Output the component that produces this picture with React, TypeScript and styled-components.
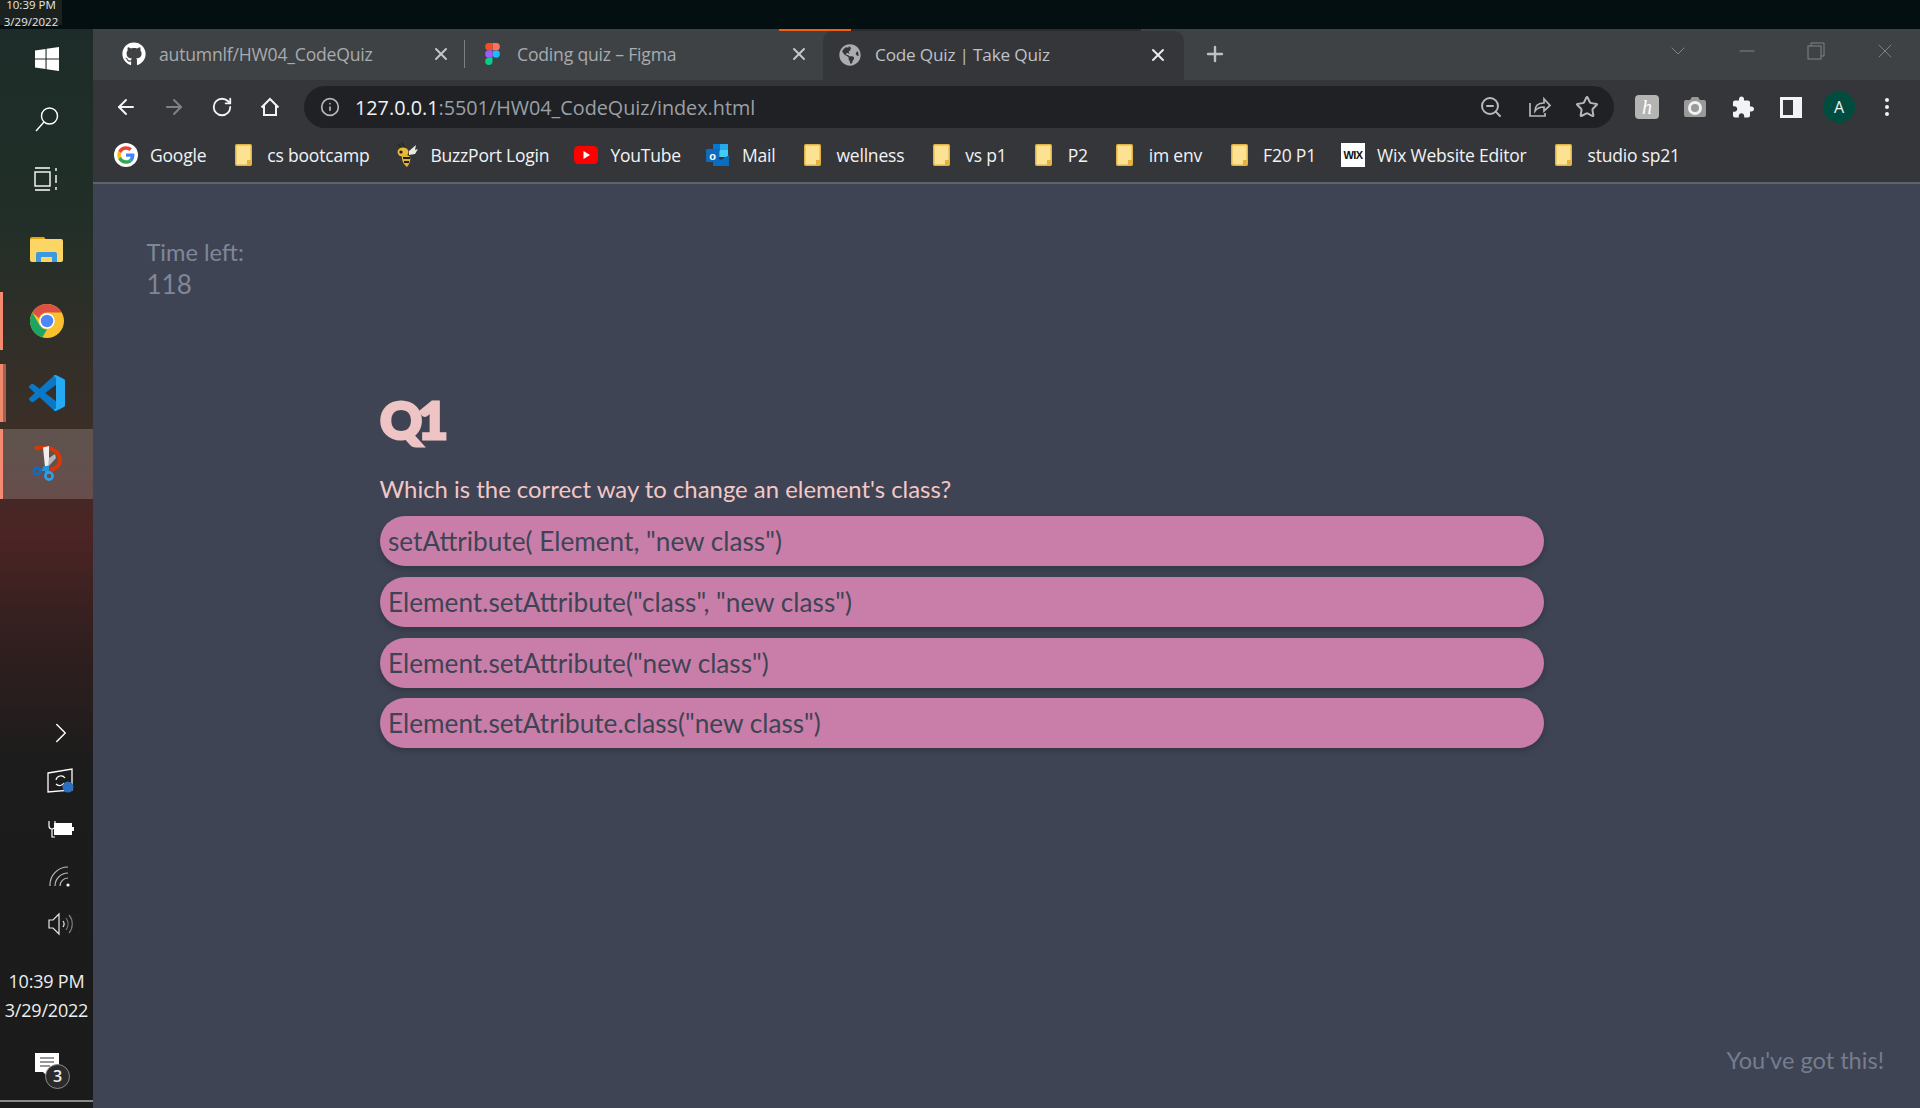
import React from 'react';
import styled, { createGlobalStyle } from 'styled-components';
import { ArrowLeft, ArrowRight, RotateCw, Info, ZoomOut, Star, X, Plus, Minus, ChevronDown, ChevronRight, MoreVertical } from 'lucide-react';
import { FaGithub, FaGlobeAmericas } from 'react-icons/fa';

const GlobalStyle = createGlobalStyle`
	html, body { margin: 0; padding: 0; height: 100%; background: #3e4453; overflow: hidden; }
	#root { height: 100%; }
`;

const Screen = styled.div`
	width: 1920px;
	height: 1108px;
	display: flex;
	flex-direction: column;
	font-family: 'Open Sans', 'Liberation Sans', sans-serif;
`;

const TopBar = styled.div`
	height: 29px;
	flex: none;
	background: #030f10;
	overflow: hidden;
`;

const TopClock = styled.div`
	width: 62px;
	height: 29px;
	background: #1b211f;
	color: #e8e8e8;
	font-size: 11.5px;
	line-height: 17px;
	text-align: center;
	& > div:first-child { margin-top: -4px; }
`;

const Desktop = styled.div`
	flex: 1;
	display: flex;
	min-height: 0;
`;

const Taskbar = styled.div`
	width: 93px;
	flex: none;
	display: flex;
	flex-direction: column;
	color: #fff;
	background: linear-gradient(180deg, #1d2c28 0%, #222f28 18%, #3a2f28 36%, #4b2424 47%, #331f1f 56%, #1c1c1c 68%, #1b1b1b 100%);
`;

const TaskSlot = styled.div<{ $h: number; $bar?: number; $active?: boolean; $mt?: number }>`
	height: ${(p) => p.$h}px;
	margin-top: ${(p) => p.$mt || 0}px;
	flex: none;
	display: flex;
	align-items: center;
	justify-content: center;
	position: relative;
	background: ${(p) => (p.$active ? 'rgba(255,255,255,0.18)' : 'transparent')};
	&::before {
		content: '';
		display: ${(p) => (p.$bar ? 'block' : 'none')};
		position: absolute;
		left: 0;
		top: ${(p) => (p.$active ? 0 : 7)}px;
		bottom: ${(p) => (p.$active ? 0 : 7)}px;
		width: ${(p) => p.$bar}px;
		background: ${(p) => (p.$bar === 6 ? 'linear-gradient(90deg,#f08a6e 50%,#a5604d 50%)' : '#f58a70')};
	}
`;

const TraySlot = styled.div<{ $h: number }>`
	height: ${(p) => p.$h}px;
	flex: none;
	display: flex;
	align-items: center;
	justify-content: center;
	padding-left: 28px;
`;

const TaskSpacer = styled.div`
	flex: 1;
`;

const TrayClock = styled.div`
	text-align: center;
	font-size: 18px;
	line-height: 29px;
	color: #eee;
	margin: 20px 0 28px;
	letter-spacing: -0.2px;
`;

const Notify = styled.div`
	height: 42px;
	margin-bottom: 5px;
	display: flex;
	align-items: flex-start;
	justify-content: center;
	position: relative;
`;

const NotifyBadge = styled.div`
	position: absolute;
	left: 45px;
	top: 11px;
	width: 25px;
	height: 25px;
	box-sizing: border-box;
	border-radius: 50%;
	background: #2b2b2b;
	border: 1px solid #8a8a8a;
	color: #eee;
	font-size: 16px;
	font-weight: 600;
	line-height: 23px;
	text-align: center;
`;

const TaskLine = styled.div`
	height: 2px;
	background: #8a8a8a;
	margin-bottom: 6px;
`;

const Browser = styled.div`
	flex: 1;
	min-width: 0;
	display: flex;
	flex-direction: column;
`;

const TabStrip = styled.div`
	height: 51px;
	flex: none;
	display: flex;
	align-items: flex-end;
	padding-left: 14px;
	background: #3e4245;
	position: relative;
`;

const Progress = styled.div`
	position: absolute;
	left: 686px;
	top: 0;
	width: 362px;
	height: 2px;
	background: linear-gradient(90deg, #f25f0c 20%, #2b2b2b 20%);
	z-index: 1;
`;

const Tab = styled.div<{ $active?: boolean; $sep?: boolean }>`
	width: ${(p) => (p.$active ? 361 : 358)}px;
	height: ${(p) => (p.$active ? 49 : 51)}px;
	flex: none;
	box-sizing: border-box;
	display: flex;
	align-items: center;
	gap: 16px;
	padding: 0 ${(p) => (p.$active ? 16 : 14)}px 2px 18px;
	position: relative;
	border-radius: 10px 10px 0 0;
	background: ${(p) => (p.$active ? '#35363a' : 'transparent')};
	color: ${(p) => (p.$active ? '#bfc2c6' : '#a8abaf')};
	font-size: ${(p) => (p.$active ? 17.2 : 17.6)}px;
	svg { flex: none; }
	&::after {
		content: '';
		display: ${(p) => (p.$sep ? 'block' : 'none')};
		position: absolute;
		right: 0;
		top: 11px;
		height: 28px;
		width: 1px;
		background: #7c8084;
	}
`;

const TabIcon = styled.div`
	width: 18px;
	height: 22px;
	flex: none;
	display: flex;
	align-items: center;
	justify-content: center;
`;

const TabTitle = styled.div`
	flex: 1;
	white-space: nowrap;
	letter-spacing: -0.2px;
`;

const NewTab = styled.div`
	width: 24px;
	height: 51px;
	margin-left: 19px;
	padding-bottom: 1px;
	box-sizing: border-box;
	display: flex;
	align-items: center;
	justify-content: center;
	color: #bdc1c6;
`;

const WinControls = styled.div`
	margin-left: auto;
	align-self: stretch;
	display: flex;
	align-items: center;
	padding: 0 23px 8px 0;
	gap: 45px;
	color: #7f8387;
`;

const Toolbar = styled.div`
	height: 54px;
	flex: none;
	box-sizing: border-box;
	display: flex;
	align-items: center;
	padding: 0 21px;
	background: #35363a;
`;

const NavRow = styled.div`
	display: flex;
	align-items: center;
	gap: 24px;
	color: #f1f3f4;
`;

const NavButton = styled.div<{ $dim?: boolean }>`
	width: 24px;
	height: 24px;
	display: flex;
	align-items: center;
	justify-content: center;
	color: ${(p) => (p.$dim ? '#7f8285' : '#f1f3f4')};
`;

const Omnibox = styled.div`
	width: 1310px;
	height: 42px;
	margin-left: 22px;
	box-sizing: border-box;
	display: flex;
	align-items: center;
	padding: 0 15px 0 16px;
	border-radius: 21px;
	background: #202124;
`;

const Url = styled.div`
	flex: 1;
	margin-left: 15px;
	font-size: 19.8px;
	color: #9aa0a6;
	white-space: nowrap;
	b { font-weight: 400; color: #f1f3f4; }
`;

const OmniIcons = styled.div`
	display: flex;
	align-items: center;
	gap: 24px;
	color: #b4b7bb;
`;

const ExtRow = styled.div`
	display: flex;
	align-items: center;
	gap: 24px;
	margin-left: 21px;
`;

const ExtButton = styled.div`
	width: 24px;
	height: 24px;
	display: flex;
	align-items: center;
	justify-content: center;
	color: #f1f3f4;
`;

const KeepBadge = styled.div`
	width: 24px;
	height: 24px;
	border-radius: 4px;
	background: #b4b4b4;
	color: #fff;
	font: italic 20px/24px 'Liberation Serif', serif;
	text-align: center;
`;

const Avatar = styled.div`
	width: 32px;
	height: 32px;
	flex: none;
	margin: 0 -4px;
	border-radius: 50%;
	background: #004d40;
	color: #f1f3f4;
	font-size: 16px;
	line-height: 32px;
	text-align: center;
`;

const Bookmarks = styled.div`
	height: 50px;
	flex: none;
	box-sizing: border-box;
	display: flex;
	align-items: center;
	gap: 25px;
	padding: 0 0 7px 21px;
	background: #35363a;
	border-bottom: 2px solid #5f6368;
`;

const Bookmark = styled.div`
	display: flex;
	align-items: center;
	gap: 12px;
	color: #f1f3f4;
	font-size: 17.5px;
	letter-spacing: -0.2px;
	white-space: nowrap;
`;

const BookmarkIcon = styled.div`
	width: 24px;
	height: 24px;
	flex: none;
	display: flex;
	align-items: center;
	justify-content: center;
`;

const WixBox = styled.div`
	width: 24px;
	height: 24px;
	background: #fff;
	color: #111;
	font: 700 11px/24px 'Liberation Sans', sans-serif;
	letter-spacing: -0.6px;
	text-align: center;
`;

const Page = styled.main`
	flex: 1;
	min-height: 0;
	box-sizing: border-box;
	display: flex;
	flex-direction: column;
	padding: 52px 36px 34px 54px;
	background: #3e4453;
	font-family: 'Lato', 'Open Sans', sans-serif;
`;

const Timer = styled.div`
	color: #7f8798;
	font-size: 23.6px;
	line-height: 32px;
	margin-left: -0.5px;
`;

const TimerValue = styled.div`
	font-size: 26px;
`;

const Quiz = styled.section`
	width: 1164px;
	margin: 86px 0 0 233px;
	display: flex;
	flex-direction: column;
`;

const QuizTitle = styled.h1`
	margin: 0;
	color: #eec4c4;
	font-size: 52px;
	line-height: 66px;
	font-weight: 900;
	-webkit-text-stroke: 3px #eec4c4;
	letter-spacing: -4.5px;
`;

const Question = styled.p`
	margin: 20px 0 0 -0.5px;
	height: 34px;
	color: #f3c7c7;
	font-size: 23.9px;
	line-height: 33px;
	white-space: nowrap;
`;

const Answers = styled.div`
	margin-top: 10px;
	display: flex;
	flex-direction: column;
	gap: 10.8px;
`;

const Answer = styled.button`
	height: 50px;
	padding: 0 0 0 8px;
	border: 0;
	border-radius: 25px;
	background: #c97eaa;
	box-shadow: 0 3px 6px rgba(0, 0, 0, 0.2);
	color: #3e4453;
	font-family: inherit;
	font-size: 26.2px;
	text-align: left;
`;

const Encourage = styled.div`
	margin-top: auto;
	align-self: flex-end;
	color: #757d8e;
	font-size: 23.6px;
`;

// little drawings
const Folder = () => (
	<svg width="17" height="22" viewBox="0 0 17 22">
		<rect x="0.75" y="0.75" width="15.5" height="20.5" rx="1" fill="#fde293" stroke="#e3b341" strokeWidth="1.5" />
		<rect x="12" y="16" width="4" height="5" fill="#e3b341" />
	</svg>
);

const GoogleIcon = () => (
	<svg width="24" height="24" viewBox="0 0 48 48">
		<circle cx="24" cy="24" r="24" fill="#fff" />
		<g transform="translate(6.5 6.5) scale(0.73)">
			<path fill="#EA4335" d="M24 9.5c3.5 0 6.7 1.2 9.2 3.6l6.9-6.9C35.9 2.4 30.5 0 24 0 14.6 0 6.5 5.4 2.6 13.2l8 6.2C12.5 13.7 17.8 9.5 24 9.5z" />
			<path fill="#4285F4" d="M47 24.5c0-1.6-.1-3.1-.4-4.5H24v9h12.9c-.6 3-2.2 5.5-4.8 7.2l7.7 6c4.5-4.2 7.2-10.3 7.2-17.7z" />
			<path fill="#FBBC05" d="M10.5 28.6c-.5-1.4-.8-3-.8-4.6s.3-3.2.8-4.6l-8-6.2C.9 16.5 0 20.1 0 24s.9 7.5 2.6 10.8l7.9-6.2z" />
			<path fill="#34A853" d="M24 48c6.5 0 11.9-2.1 15.9-5.8l-7.7-6c-2.2 1.5-4.9 2.3-8.2 2.3-6.2 0-11.5-4.2-13.4-9.9l-8 6.2C6.5 42.6 14.6 48 24 48z" />
		</g>
	</svg>
);

const FigmaIcon = () => (
	<svg width="15" height="22" viewBox="0 0 38 57">
		<path fill="#1abcfe" d="M19 28.5a9.5 9.5 0 1 1 19 0 9.5 9.5 0 0 1-19 0z" />
		<path fill="#0acf83" d="M0 47.5A9.5 9.5 0 0 1 9.5 38H19v9.5a9.5 9.5 0 1 1-19 0z" />
		<path fill="#ff7262" d="M19 0v19h9.5a9.5 9.5 0 1 0 0-19H19z" />
		<path fill="#f24e1e" d="M0 9.5A9.5 9.5 0 0 0 9.5 19H19V0H9.5A9.5 9.5 0 0 0 0 9.5z" />
		<path fill="#a259ff" d="M0 28.5A9.5 9.5 0 0 0 9.5 38H19V19H9.5A9.5 9.5 0 0 0 0 28.5z" />
	</svg>
);

const BuzzIcon = () => (
	<svg width="24" height="26" viewBox="0 0 24 26">
		<path d="M4 2l5 5M8 1l3 5" stroke="#2a2a1a" strokeWidth="1.5" fill="none" />
		<path d="M15 9l7-6-1 5 3-1-3 5-6 1z" fill="#e9e9e0" />
		<ellipse cx="9" cy="10" rx="5.5" ry="4.5" fill="#e8b93a" />
		<path d="M8 13c3-1 7 0 8 2 1 3-1 8-3 10-3-2-6-7-5-12z" fill="#e5b42e" />
		<path d="M9 16l7 0M10 20l5 0" stroke="#231f10" strokeWidth="2" />
		<circle cx="7" cy="10" r="1.6" fill="#1c1a10" />
	</svg>
);

const YoutubeIcon = () => (
	<svg width="24" height="18" viewBox="0 0 24 18">
		<rect width="24" height="18" rx="4.5" fill="#f00" />
		<path d="M9.5 5l6.5 4-6.500 4z" fill="#fff" />
	</svg>
);

const OutlookIcon = () => (
	<svg width="24" height="24" viewBox="0 0 24 24">
		<rect x="7" y="1" width="15" height="13" fill="#28a8ea" />
		<rect x="7" y="1" width="7" height="7" fill="#0078d4" />
		<rect x="14" y="7" width="8" height="7" fill="#50d9ff" opacity="0.7" />
		<path d="M7 12l8 5 8-5v11H7z" fill="#0a6cbd" />
		<rect x="0" y="6" width="13" height="13" rx="1" fill="#0f6cbd" />
		<text x="6.5" y="16.5" textAnchor="middle" fontSize="11" fontWeight="700" fill="#fff" fontFamily="Liberation Sans">o</text>
	</svg>
);

const HomeIcon = () => (
	<svg width="24" height="24" viewBox="0 0 24 24" fill="none" stroke="currentColor" strokeWidth="2">
		<path d="M3.5 12.5 12 4l8.5 8.5M6 10.500V20h12v-9.500" />
	</svg>
);

const ShareIcon = () => (
	<svg width="24" height="24" viewBox="0 0 24 24" fill="none" stroke="currentColor" strokeWidth="1.7">
		<path d="M3 8v13h15v-3" />
		<path d="M8 16c0-5 3-8 9-8V4l6 6.500L17 16v-4c-4 0-7 1-9 4z" />
	</svg>
);

const CameraIcon = () => (
	<svg width="24" height="24" viewBox="0 0 24 24">
		<path d="M3 5h4l2-3h6l2 3h4a2 2 0 0 1 2 2v13a2 2 0 0 1-2 2H3a2 2 0 0 1-2-2V7a2 2 0 0 1 2-2z" fill="#9a9a9a" />
		<circle cx="12" cy="13" r="5.500" fill="none" stroke="#f1f1f1" strokeWidth="3" />
	</svg>
);

const PuzzleIcon = () => (
	<svg width="25" height="25" viewBox="0 0 24 24" fill="currentColor">
		<path d="M20.500 11H19V7c0-1.100-.9-2-2-2h-4V3.500C13 2.120 11.880 1 10.500 1S8 2.120 8 3.500V5H4c-1.100 0-1.990.9-1.990 2v3.800H3.500c1.490 0 2.700 1.210 2.700 2.700s-1.210 2.700-2.700 2.700H2V20c0 1.100.9 2 2 2h3.800v-1.500c0-1.490 1.210-2.700 2.700-2.700 1.490 0 2.700 1.210 2.700 2.700V22H17c1.100 0 2-.9 2-2v-4h1.500c1.380 0 2.500-1.120 2.500-2.500S21.880 11 20.500 11z" />
	</svg>
);

const SidePanelIcon = () => (
	<svg width="22" height="21" viewBox="0 0 22 21">
		<rect width="22" height="21" fill="#f1f3f4" />
		<rect x="3" y="3" width="10" height="15" fill="#35363a" />
	</svg>
);

const WindowsIcon = () => (
	<svg width="24" height="24" viewBox="0 0 24 24" fill="#fff">
		<path d="M0 3.500 10.500 2v9.400H0zM11.600 1.800 24 0v11.400H11.600zM0 12.600h10.500V22L0 20.500zM11.600 12.600H24V24l-12.400-1.800z" />
	</svg>
);

const SearchIcon = () => (
	<svg width="26" height="26" viewBox="0 0 26 26" fill="none" stroke="#fff" strokeWidth="1.4">
		<circle cx="15.500" cy="10" r="8" />
		<path d="M10 16 2 25" />
	</svg>
);

const TaskViewIcon = () => (
	<svg width="26" height="24" viewBox="0 0 26 24" fill="none" stroke="#fff" strokeWidth="1.4">
		<rect x="1" y="5" width="15" height="14" />
		<path d="M1 1h15M1 23h15M22 1v3M22 8v8M22 20v3" />
	</svg>
);

const ExplorerIcon = () => (
	<svg width="33" height="26" viewBox="0 0 33 26">
		<path d="M0 3a2 2 0 0 1 2-2h12l3 4H0z" fill="#e2a70f" />
		<rect y="3" width="33" height="23" rx="2" fill="#fcd565" />
		<path d="M6 26v-8a2 2 0 0 1 2-2h17a2 2 0 0 1 2 2v8h-5v-5H11v5z" fill="#3a99df" />
	</svg>
);

const ChromeIcon = () => (
	<svg width="34" height="34" viewBox="0 0 48 48">
		<circle cx="24" cy="24" r="24" fill="#fbc02d" />
		<path d="M24 0a24 24 0 0 1 20.800 12H24a12 12 0 0 0-11.400 8.200L3.200 12A24 24 0 0 1 24 0z" fill="#dd5044" />
		<path d="M3.200 12l10.400 18A12 12 0 0 0 24 36L17.500 47.100A24 24 0 0 1 3.200 12z" fill="#1da462" />
		<circle cx="24" cy="24" r="11" fill="#fff" />
		<circle cx="24" cy="24" r="8.800" fill="#4e86f5" />
	</svg>
);

const VsCodeIcon = () => (
	<svg width="36" height="36" viewBox="0 0 100 100">
		<path fill="#0a78c6" d="M96.500 10.800 75.900.9a6.200 6.200 0 0 0-7.100 1.200L29.400 38 12.200 25a4.200 4.200 0 0 0-5.300.2L1.400 30.200a4.200 4.200 0 0 0 0 6.200L16.300 50 1.400 63.600a4.200 4.200 0 0 0 0 6.200l5.500 5a4.200 4.200 0 0 0 5.300.2l17.200-13 39.400 35.900a6.200 6.200 0 0 0 7.100 1.200l20.600-9.900a6.200 6.200 0 0 0 3.500-5.600V16.400a6.200 6.200 0 0 0-3.500-5.600ZM75 72.700 45.100 50 75 27.300Z" />
		<path fill="#24a9f4" d="M68.800 97.900a6.200 6.200 0 0 0 7.100 1.200l20.600-9.900a6.200 6.200 0 0 0 3.500-5.600V16.400a6.200 6.200 0 0 0-3.500-5.600L75.900.9a6.200 6.200 0 0 0-7.100 1.200L75 8v84z" />
	</svg>
);

const SnipIcon = () => (
	<svg width="30" height="36" viewBox="0 0 30 36">
		<path d="M3 3C6 1 9 .8 12 1c9 1 16 6 16 13 0 5-4 9-10 10" fill="none" stroke="#d43a08" strokeWidth="4" />
		<path d="M11 1.500 17 0v19l-4 2z" fill="#eeeeee" />
		<path d="M17 12l6-4 1 4-8 9z" fill="#b5b5b5" />
		<path d="M12 20h5v8h-4v-3H9z" fill="#2094de" />
		<circle cx="5" cy="25" r="3.200" fill="none" stroke="#0f6cc0" strokeWidth="2.600" />
		<circle cx="17" cy="30" r="3.600" fill="none" stroke="#2ca0ea" strokeWidth="2.600" />
	</svg>
);

const SyncIcon = () => (
	<svg width="28" height="26" viewBox="0 0 28 26">
		<path d="M1 5 25 1v21L1 24z" fill="none" stroke="#fff" strokeWidth="1.300" />
		<path d="M9 12a5 5 0 0 1 9-2M17 15a5 5 0 0 1-8 1" fill="none" stroke="#fff" strokeWidth="1.200" />
		<circle cx="21" cy="19" r="5.500" fill="#2a6fc2" />
	</svg>
);

const BatteryIcon = () => (
	<svg width="26" height="18" viewBox="0 0 26 18">
		<path d="M1 1v5a3 3 0 0 0 6 0V1M4 9v8h3" fill="none" stroke="#fff" strokeWidth="1.200" />
		<rect x="6" y="3" width="18" height="12" fill="#fff" />
		<rect x="24" y="7" width="2" height="4" fill="#fff" />
	</svg>
);

const WifiIcon = () => (
	<svg width="24" height="24" viewBox="0 0 24 24" fill="none" stroke="#bdbdbd" strokeWidth="1.200">
		<path d="M1 21A18 18 0 0 1 19 2M6 21A13 13 0 0 1 19 8M11 21a8 8 0 0 1 8-8" />
		<circle cx="19" cy="20" r="1.600" fill="#fff" stroke="none" />
	</svg>
);

const VolumeIcon = () => (
	<svg width="26" height="24" viewBox="0 0 26 24" fill="none" stroke="#e8e8e8" strokeWidth="1.200">
		<path d="M1 8h4l6-6v20l-6-6H1z" />
		<path d="M15 9a5 5 0 0 1 0 6" />
		<path d="M18 6a10 10 0 0 1 0 12M21 3a14 14 0 0 1 0 18" stroke="#7a7a7a" />
	</svg>
);

const NotifyIcon = () => (
	<svg width="24" height="26" viewBox="0 0 24 26">
		<path d="M0 0h24v19h-11v5l-5-5H0z" fill="#fff" />
		<path d="M5 5h14M5 9h14M5 13h10" stroke="#333" strokeWidth="1.200" />
	</svg>
);

const bookmarks: { label: string; icon?: React.ReactNode }[] = [
	{ label: 'Google', icon: <GoogleIcon /> },
	{ label: 'cs bootcamp' },
	{ label: 'BuzzPort Login', icon: <BuzzIcon /> },
	{ label: 'YouTube', icon: <YoutubeIcon /> },
	{ label: 'Mail', icon: <OutlookIcon /> },
	{ label: 'wellness' },
	{ label: 'vs p1' },
	{ label: 'P2' },
	{ label: 'im env' },
	{ label: 'F20 P1' },
	{ label: 'Wix Website Editor', icon: <WixBox>WIX</WixBox> },
	{ label: 'studio sp21' },
];

const answers = [
	'setAttribute( Element, "new class")',
	'Element.setAttribute("class", "new class")',
	'Element.setAttribute("new class")',
	'Element.setAtribute.class("new class")',
];

const App = () => (
	<Screen>
		<GlobalStyle />
		<TopBar>
			<TopClock>
				<div>10:39 PM</div>
				<div>3/29/2022</div>
			</TopClock>
		</TopBar>
		<Desktop>
			<Taskbar>
				<TaskSlot $h={60}><WindowsIcon /></TaskSlot>
				<TaskSlot $h={60}><SearchIcon /></TaskSlot>
				<TaskSlot $h={60}><TaskViewIcon /></TaskSlot>
				<TaskSlot $h={72} $mt={4}><ExplorerIcon /></TaskSlot>
				<TaskSlot $h={72} $bar={3}><ChromeIcon /></TaskSlot>
				<TaskSlot $h={72} $bar={6}><VsCodeIcon /></TaskSlot>
				<TaskSlot $h={70} $bar={3} $active><SnipIcon /></TaskSlot>
				<TaskSpacer />
				<TraySlot $h={48}><ChevronRight size={34} strokeWidth={1} /></TraySlot>
				<TraySlot $h={48}><SyncIcon /></TraySlot>
				<TraySlot $h={48}><BatteryIcon /></TraySlot>
				<TraySlot $h={48}><WifiIcon /></TraySlot>
				<TraySlot $h={46}><VolumeIcon /></TraySlot>
				<TrayClock>
					<div>10:39 PM</div>
					<div>3/29/2022</div>
				</TrayClock>
				<Notify>
					<NotifyIcon />
					<NotifyBadge>3</NotifyBadge>
				</Notify>
				<TaskLine />
			</Taskbar>
			<Browser>
				<TabStrip>
					<Progress />
					<Tab $sep>
						<TabIcon><FaGithub size={24} color="#fff" /></TabIcon>
						<TabTitle>autumnlf/HW04_CodeQuiz</TabTitle>
						<X size={20} color="#c4c7ca" strokeWidth={2.4} />
					</Tab>
					<Tab>
						<TabIcon><FigmaIcon /></TabIcon>
						<TabTitle>Coding quiz – Figma</TabTitle>
						<X size={20} color="#c4c7ca" strokeWidth={2.4} />
					</Tab>
					<Tab $active>
						<TabIcon><FaGlobeAmericas size={22} color="#a9acb0" /></TabIcon>
						<TabTitle>Code Quiz | Take Quiz</TabTitle>
						<X size={20} color="#e8eaed" strokeWidth={2.4} />
					</Tab>
					<NewTab><Plus size={26} strokeWidth={2.4} /></NewTab>
					<WinControls>
						<ChevronDown size={24} strokeWidth={1} />
						<Minus size={24} strokeWidth={1} />
						<svg width="24" height="24" viewBox="0 0 24 24" fill="none" stroke="currentColor" strokeWidth="1">
							<rect x="4" y="7" width="13" height="13" />
							<path d="M7 7V4h13v13h-3" />
						</svg>
						<X size={24} strokeWidth={1} />
					</WinControls>
				</TabStrip>
				<Toolbar>
					<NavRow>
						<NavButton><ArrowLeft size={24} /></NavButton>
						<NavButton $dim><ArrowRight size={24} /></NavButton>
						<NavButton><RotateCw size={22} /></NavButton>
						<NavButton><HomeIcon /></NavButton>
					</NavRow>
					<Omnibox>
						<Info size={20} color="#b4b7bb" />
						<Url><b>127.0.0.1</b>:5501/HW04_CodeQuiz/index.html</Url>
						<OmniIcons>
							<ZoomOut size={24} />
							<ShareIcon />
							<Star size={24} />
						</OmniIcons>
					</Omnibox>
					<ExtRow>
						<KeepBadge>h</KeepBadge>
						<ExtButton><CameraIcon /></ExtButton>
						<ExtButton><PuzzleIcon /></ExtButton>
						<ExtButton><SidePanelIcon /></ExtButton>
						<Avatar>A</Avatar>
						<ExtButton><MoreVertical size={24} /></ExtButton>
					</ExtRow>
				</Toolbar>
				<Bookmarks>
					{bookmarks.map((b) => (
						<Bookmark key={b.label}>
							<BookmarkIcon>{b.icon || <Folder />}</BookmarkIcon>
							{b.label}
						</Bookmark>
					))}
				</Bookmarks>
				<Page>
					<Timer>
						Time left:
						<TimerValue>118</TimerValue>
					</Timer>
					<Quiz>
						<QuizTitle>Q1</QuizTitle>
						<Question>Which is the correct way to change an element's class?</Question>
						<Answers>
							{answers.map((a) => (
								<Answer key={a}>{a}</Answer>
							))}
						</Answers>
					</Quiz>
					<Encourage>You've got this!</Encourage>
				</Page>
			</Browser>
		</Desktop>
	</Screen>
);

export default App;
